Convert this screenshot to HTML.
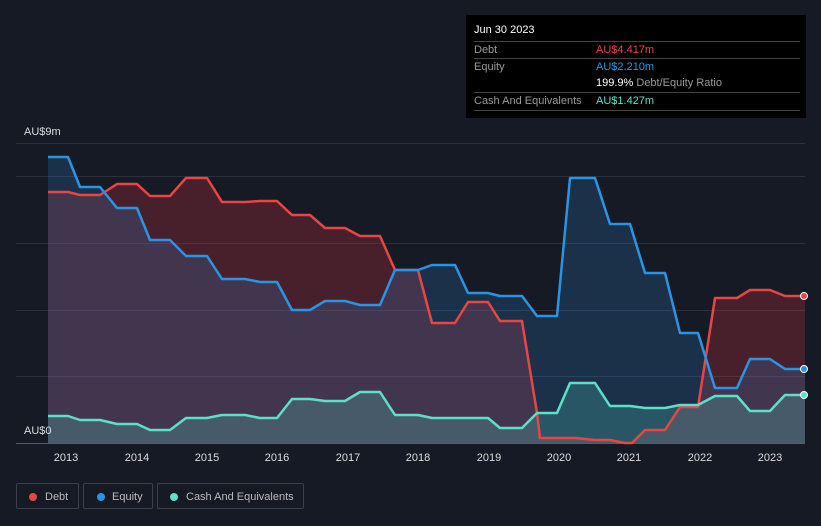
<!DOCTYPE html>
<html><head><meta charset="utf-8"><style>
body{margin:0;width:821px;height:526px;background:#151a24;font-family:"Liberation Sans",sans-serif;overflow:hidden;position:relative}
.tt{position:absolute;left:466px;top:15px;width:340px;height:103px;background:#000;font-size:11px;color:#ddd}
.tt .r{position:absolute;left:8px;right:6px;border-top:1px solid #444;height:17px;line-height:17px;color:#999}
.tt .v{position:absolute;left:122px}
.leg{position:absolute;top:483px;height:26px;border:1px solid #3b3f4a;border-radius:2px;color:#bbb;font-size:11px;line-height:26px;box-sizing:border-box}
.leg i{position:absolute;top:9px;width:8px;height:8px;border-radius:50%}
</style></head><body>
<svg width="821" height="526" style="position:absolute;left:0;top:0">
<g stroke="#2b303b" stroke-width="1">
<line x1="16" x2="805" y1="143.5" y2="143.5"/><line x1="16" x2="805" y1="176.5" y2="176.5"/><line x1="16" x2="805" y1="243.5" y2="243.5"/><line x1="16" x2="805" y1="310.5" y2="310.5"/><line x1="16" x2="805" y1="376.5" y2="376.5"/></g>
<line x1="16" x2="805" y1="443.5" y2="443.5" stroke="#555a66"/>
<path fill="rgba(200,50,60,0.28)" d="M48 192L68 192L80 195L100 195L117 184L137 184L150 196L170 196L186 178L207 178L222 202L245 202L260 201L277 201L292 215L310 215L325 228L345 228L360 236L380 236L395 270L418 270L432 323L455 323L468 302L488 302L500 321L522 321L537 413L540 438L575 438L595 440L610 440L625 443L632 443L645 430L665 430L680 407L698 407L715 298L737 298L750 290L770 290L785 296L805 296L805 443L48 443Z"/>
<path fill="rgba(50,130,210,0.22)" d="M48 157L68 157L80 187L100 187L117 208L137 208L150 240L170 240L186 256L207 256L222 279L245 279L260 282L277 282L292 310L310 310L325 301L345 301L360 305L380 305L395 270L418 270L432 265L455 265L468 293L488 293L500 296L522 296L537 316L557 316L570 178L595 178L610 224L630 224L645 273L665 273L680 333L698 333L715 388L737 388L750 359L770 359L785 369L805 369L805 443L48 443Z"/>
<path fill="rgba(90,220,200,0.22)" d="M48 416L68 416L80 420L100 420L117 424L137 424L150 430L170 430L186 418L207 418L222 415L245 415L260 418L277 418L292 399L310 399L325 401L345 401L360 392L380 392L395 415L418 415L432 418L488 418L500 428L522 428L537 413L557 413L570 383L595 383L610 406L630 406L645 408L665 408L680 405L698 405L715 396L737 396L750 411L770 411L785 395L805 395L805 443L48 443Z"/>
<g fill="none" stroke-width="2.5" stroke-linejoin="round">
<path stroke="#e84545" d="M48 192L68 192L80 195L100 195L117 184L137 184L150 196L170 196L186 178L207 178L222 202L245 202L260 201L277 201L292 215L310 215L325 228L345 228L360 236L380 236L395 270L418 270L432 323L455 323L468 302L488 302L500 321L522 321L537 413L540 438L575 438L595 440L610 440L625 443L632 443L645 430L665 430L680 407L698 407L715 298L737 298L750 290L770 290L785 296L805 296"/>
<path stroke="#2a94e4" d="M48 157L68 157L80 187L100 187L117 208L137 208L150 240L170 240L186 256L207 256L222 279L245 279L260 282L277 282L292 310L310 310L325 301L345 301L360 305L380 305L395 270L418 270L432 265L455 265L468 293L488 293L500 296L522 296L537 316L557 316L570 178L595 178L610 224L630 224L645 273L665 273L680 333L698 333L715 388L737 388L750 359L770 359L785 369L805 369"/>
<path stroke="#5de0c8" d="M48 416L68 416L80 420L100 420L117 424L137 424L150 430L170 430L186 418L207 418L222 415L245 415L260 418L277 418L292 399L310 399L325 401L345 401L360 392L380 392L395 415L418 415L432 418L488 418L500 428L522 428L537 413L557 413L570 383L595 383L610 406L630 406L645 408L665 408L680 405L698 405L715 396L737 396L750 411L770 411L785 395L805 395"/>
</g>
<circle cx="804" cy="296" r="3.5" fill="#e84545" stroke="#fff" stroke-width="1"/>
<circle cx="804" cy="369" r="3.5" fill="#2a94e4" stroke="#fff" stroke-width="1"/>
<circle cx="804" cy="395" r="3.5" fill="#5de0c8" stroke="#fff" stroke-width="1"/>
<g fill="#ddd" font-size="11" font-family="Liberation Sans,sans-serif" text-anchor="middle">
<text x="66" y="461">2013</text><text x="137" y="461">2014</text><text x="207" y="461">2015</text><text x="277" y="461">2016</text><text x="348" y="461">2017</text><text x="418" y="461">2018</text><text x="489" y="461">2019</text><text x="559" y="461">2020</text><text x="629" y="461">2021</text><text x="700" y="461">2022</text><text x="770" y="461">2023</text>
<text x="24" y="135" text-anchor="start">AU$9m</text><text x="24" y="434" text-anchor="start">AU$0</text></g>
</svg>
<div class="tt">
<div style="position:absolute;left:8px;top:9px;color:#fff">Jun 30 2023</div>
<div class="r" style="top:26px">Debt<span class="v" style="color:#e84545">AU$4.417m</span></div>
<div class="r" style="top:43px">Equity<span class="v" style="color:#2a94e4">AU$2.210m</span></div>
<div class="r" style="top:60px;border-top:none"><span class="v" style="color:#fff">199.9% <span style="color:#999">Debt/Equity Ratio</span></span></div>
<div class="r" style="top:77px;border-bottom:1px solid #444">Cash And Equivalents<span class="v" style="color:#5de0c8">AU$1.427m</span></div>
</div>
<div class="leg" style="left:16px;width:63px"><i style="left:12px;background:#e84545"></i><span style="position:absolute;left:28px">Debt</span></div>
<div class="leg" style="left:83px;width:70px"><i style="left:13px;background:#2a94e4"></i><span style="position:absolute;left:28px">Equity</span></div>
<div class="leg" style="left:157px;width:147px"><i style="left:12px;background:#5de0c8"></i><span style="position:absolute;left:28px">Cash And Equivalents</span></div>
</body></html>
